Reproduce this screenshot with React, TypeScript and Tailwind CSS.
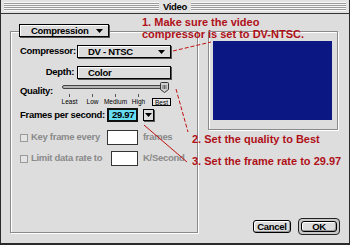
import React from 'react';

const etched = 'border border-[#8a8a8a] shadow-[1px_1px_0_#fff,inset_1px_1px_0_#fff]';

function Arrow() {
  return (
    <svg width="7" height="4" viewBox="0 0 7 4" className="shrink-0">
      <path d="M0 0H7L3.5 4Z" fill="#000" />
    </svg>
  );
}

function Popup({ label, arrow = true, className = '' }: { label: string; arrow?: boolean; className?: string }) {
  return (
    <div
      className={`flex items-center h-[13px] border border-black bg-[#dcdcdc] shadow-[1px_1px_0_#555,inset_1px_1px_0_#fff] ${className}`}
    >
      <span className="flex-1 leading-[11px]">{label}</span>
      {arrow && <Arrow />}
    </div>
  );
}

function Thumb() {
  return (
    <svg width="9" height="11" viewBox="0 0 9 11" className="absolute left-[102px] top-0">
      <path d="M0.5 1.5Q0.5 0.5 1.5 0.5H7.5Q8.5 0.5 8.5 1.5V7.5L4.5 10.5L0.5 7.5Z" fill="#cfcfcf" stroke="#333" />
      <path d="M3 3V7M4.5 3V7M6 3V7" stroke="#666" />
    </svg>
  );
}

function Checkbox() {
  return <span className="w-[8px] h-[8px] border border-[#9a9a9a] bg-[#e4e4e4] shrink-0" />;
}

function GroupBox() {
  const ticks = ['Least', 'Low', 'Medium', 'High'];
  return (
    <div className={`relative w-[188px] h-[202px] pl-[9px] pt-[13px] ${etched}`}>
      <div className="absolute left-[8px] -top-[8px] w-[90px]">
        <Popup label="Compression" className="pl-[11px] pr-[5px]" />
      </div>

      <div className="flex items-center h-[13px]">
        <span className="w-[54px] text-right">Compressor:</span>
        <Popup label="DV - NTSC" className="ml-[3px] w-[94px] pl-[10px] pr-[5px]" />
      </div>

      <div className="flex items-center h-[13px] mt-[8px]">
        <span className="w-[54px] text-right">Depth:</span>
        <Popup label="Color" arrow={false} className="ml-[3px] w-[94px] pl-[10px]" />
      </div>

      <div className="flex mt-[3px]">
        <span className="w-[38px] pt-[3px] leading-[11px]">Quality:</span>
        <div className="flex flex-col w-[116px]">
          <div className="relative h-[11px]">
            <div className="mt-[3px] ml-[4px] w-[104px] h-[4px] rounded-full border border-[#444] bg-[#b4b4b4]" />
            <Thumb />
          </div>
          <div className="flex h-[5px]">
            {ticks.map((t) => (
              <div key={t} className="w-[23px] flex justify-center">
                <span className="w-px h-[3px] mt-[1px] bg-[#555]" />
              </div>
            ))}
          </div>
          <div className="flex h-[8px] text-[6.5px] leading-[6px] font-normal tracking-normal">
            {ticks.map((t) => (
              <div key={t} className="w-[23px] flex justify-center pt-[1px]">
                {t}
              </div>
            ))}
            <div className="w-[23px] flex justify-center">
              <span className="border border-black px-[2px] pt-[0.5px] h-[8px] bg-[#e6e6e6]">Best</span>
            </div>
          </div>
        </div>
      </div>

      <div className="flex items-center h-[14px] mt-[2px]">
        <span className="w-[87px]">Frames per second:</span>
        <div className="w-[31px] h-[14px] border-2 border-[#111] bg-[#66dcf0] flex items-center pl-[3px] leading-[10px]">
          29.97
        </div>
        <div className="ml-[5px] w-[11px] h-[12px] border border-black bg-[#dcdcdc] shadow-[1px_1px_0_#555] flex items-center justify-center">
          <Arrow />
        </div>
      </div>

      <div className="flex items-center h-[15px] mt-[8px] text-[#8a8a8a]">
        <Checkbox />
        <span className="ml-[3px] w-[76px]">Key frame every</span>
        <span className="w-[31px] h-[15px] border border-[#333] bg-white" />
        <span className="ml-[5px]">frames</span>
      </div>

      <div className="flex items-center h-[15px] mt-[6px] text-[#8a8a8a]">
        <Checkbox />
        <span className="ml-[3px] w-[80px]">Limit data rate to</span>
        <span className="w-[27px] h-[15px] border border-[#333] bg-white" />
        <span className="ml-[5px]">K/Second</span>
      </div>
    </div>
  );
}

export default function App() {
  return (
    <div className="relative w-[350px] h-[245px] overflow-hidden bg-[#dddddd] border-x border-b-2 border-[#2a2a2a] font-['Liberation_Sans',Arial,sans-serif] font-bold text-[9.5px] tracking-[-0.3px] text-black">
      <div className="h-[14px] border-b border-[#333] flex items-center px-[3px] bg-[#e2e2e2]">
        <div className="flex-1 h-[9px] bg-[repeating-linear-gradient(to_bottom,#f7f7f7_0px,#f7f7f7_1px,#9a9a9a_1px,#9a9a9a_2px)]" />
        <span className="px-[4px] leading-[10px]">Video</span>
        <div className="flex-1 h-[9px] bg-[repeating-linear-gradient(to_bottom,#f7f7f7_0px,#f7f7f7_1px,#9a9a9a_1px,#9a9a9a_2px)]" />
      </div>

      <div className="flex pl-[9px] pt-[17px]">
        <GroupBox />

        <div className="ml-[10px] w-[132px] flex flex-col">
          <div className={`w-[130px] h-[99px] pl-[4px] pt-[9px] ${etched}`}>
            <div className="w-[119px] h-[79px] bg-[#0b1783]" />
          </div>

          <div className="mt-[88px] h-[17px] flex items-center justify-end">
            <div className="w-[38px] h-[13px] rounded-[3px] border border-black bg-[#dcdcdc] shadow-[inset_1px_1px_0_#fff,inset_-1px_-1px_0_#999] flex items-center justify-center leading-[10px]">
              Cancel
            </div>
            <div className="ml-[7px] w-[42px] h-[17px] rounded-[4px] border border-[#222] bg-[#c8c8c8] p-[2px]">
              <div className="h-full rounded-[3px] border border-black bg-[#dcdcdc] shadow-[inset_1px_1px_0_#fff,inset_-1px_-1px_0_#999] flex items-center justify-center leading-[10px]">
                OK
              </div>
            </div>
          </div>
        </div>
      </div>

      <div className="absolute left-[141px] top-[16px] text-[11px] leading-[12px] tracking-normal text-[#b01018] whitespace-nowrap">
        <div>1. Make sure the video</div>
        <div>compressor is set to DV-NTSC.</div>
      </div>
      <div className="absolute left-[191px] top-[133px] text-[11px] leading-[12px] tracking-normal text-[#b01018] whitespace-nowrap">
        2. Set the quality to Best
      </div>
      <div className="absolute left-[191px] top-[155px] text-[11px] leading-[12px] tracking-normal text-[#b01018] whitespace-nowrap">
        3. Set the frame rate to 29.97
      </div>

      <svg className="absolute inset-0 pointer-events-none" width="350" height="245">
        <line x1="172" y1="51" x2="210" y2="42" stroke="#c01010" strokeDasharray="4 2" />
        <line x1="175" y1="89" x2="187" y2="132" stroke="#c01010" strokeDasharray="4 2" />
        <line x1="143" y1="125" x2="186" y2="162" stroke="#c01010" />
      </svg>
    </div>
  );
}
